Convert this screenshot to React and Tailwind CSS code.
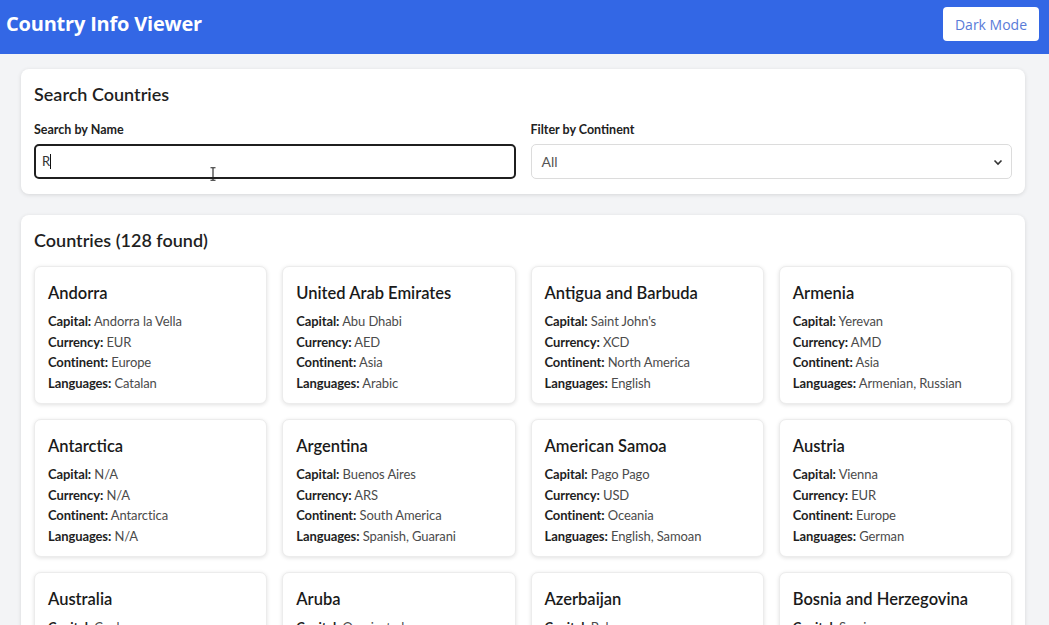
import React from "react";

const countries = [
  { name: "Andorra", capital: "Andorra la Vella", currency: "EUR", continent: "Europe", languages: "Catalan" },
  { name: "United Arab Emirates", capital: "Abu Dhabi", currency: "AED", continent: "Asia", languages: "Arabic" },
  { name: "Antigua and Barbuda", capital: "Saint John's", currency: "XCD", continent: "North America", languages: "English" },
  { name: "Armenia", capital: "Yerevan", currency: "AMD", continent: "Asia", languages: "Armenian, Russian" },
  { name: "Antarctica", capital: "N/A", currency: "N/A", continent: "Antarctica", languages: "N/A" },
  { name: "Argentina", capital: "Buenos Aires", currency: "ARS", continent: "South America", languages: "Spanish, Guarani" },
  { name: "American Samoa", capital: "Pago Pago", currency: "USD", continent: "Oceania", languages: "English, Samoan" },
  { name: "Austria", capital: "Vienna", currency: "EUR", continent: "Europe", languages: "German" },
  { name: "Australia", capital: "Canberra", currency: "AUD", continent: "Oceania", languages: "English" },
  { name: "Aruba", capital: "Oranjestad", currency: "AWG", continent: "North America", languages: "Dutch, Papiamento" },
  { name: "Azerbaijan", capital: "Baku", currency: "AZN", continent: "Asia", languages: "Azerbaijani" },
  { name: "Bosnia and Herzegovina", capital: "Sarajevo", currency: "BAM", continent: "Europe", languages: "Bosnian, Croatian, Serbian" },
];

const lato = { fontFamily: 'Lato, "Open Sans", sans-serif' };

function Row({ label, value }) {
  return (
    <p className="text-[13px] leading-[20.5px] text-[#4b4b4b] tracking-[-0.1px]" style={lato}>
      <span className="font-bold text-[#1f1f1f]">{label}:</span> {value}
    </p>
  );
}

export default function App() {
  return (
    <div className="min-h-screen bg-[#f3f4f6]" style={{ fontFamily: '"Open Sans", "Noto Sans", sans-serif' }}>
      <header className="h-[54px] bg-[#3367e5] pl-[6px] pr-[10px]">
        <div className="h-[48px] flex items-center justify-between">
          <h1 className="text-white text-[20px] font-bold tracking-[-0.2px]">Country Info Viewer</h1>
          <button className="bg-white text-[#5a7bd8] text-[14px] w-[96px] h-[34px] rounded-[4px]">Dark Mode</button>
        </div>
      </header>
      <main className="pl-[21px] pr-[24px] pt-[15px] flex flex-col gap-[21px]">
        <section className="bg-white rounded-lg shadow-[0_1px_4px_rgba(0,0,0,0.12)] px-[13px] pt-[11px] pb-[15px]">
          <h2 className="text-[18px] leading-[28px] font-semibold text-[#1f1f1f]" style={lato}>Search Countries</h2>
          <div className="mt-[13px] grid grid-cols-2 gap-[15px]">
            <div>
              <label className="block text-[12.5px] leading-[18px] font-bold text-[#222] mb-[5px]" style={lato}>Search by Name</label>
              <div className="h-[35px] rounded-[5px] border-2 border-[#1f1f1f] flex items-center px-[6px] text-[13px] text-[#333] relative" style={lato}>
                R<span className="inline-block w-[1px] h-[15px] bg-[#111]"></span>
                <svg className="absolute left-[174px] top-[21px]" width="6" height="14" viewBox="0 0 6 14">
                  <path d="M0.5 0.8 H5.5 M3 0.8 V13.2 M0.5 13.2 H5.5" fill="none" stroke="#222" strokeWidth="1.1" />
                </svg>
              </div>
            </div>
            <div>
              <label className="block text-[12.5px] leading-[18px] font-bold text-[#222] mb-[5px]" style={lato}>Filter by Continent</label>
              <div className="h-[35px] rounded-[5px] border border-[#dcdcdc] flex items-center justify-between pl-[10px] pr-[8px] text-[14px] text-[#555]" style={lato}>
                <span>All</span>
                <svg width="10" height="10" viewBox="0 0 10 10"><path d="M1.5 3.5 L5 7 L8.5 3.5" fill="none" stroke="#333" strokeWidth="1.6" /></svg>
              </div>
            </div>
          </div>
        </section>
        <section className="bg-white rounded-lg shadow-[0_1px_4px_rgba(0,0,0,0.12)] px-[13px] pt-[11px] pb-[14px]">
          <h2 className="text-[18px] leading-[28px] font-semibold text-[#1f1f1f]" style={lato}>Countries (128 found)</h2>
          <div className="mt-[12px] grid grid-cols-4 gap-[15px]">
            {countries.map((c) => (
              <div key={c.name} className="h-[138px] rounded-[7px] border border-[#ececec] bg-white shadow-[0_1px_4px_rgba(0,0,0,0.12)] px-[13px] pt-[14px]">
                <h3 className="text-[16.5px] leading-[24px] font-semibold text-[#1a1a1a] mb-[6px]" style={lato}>{c.name}</h3>
                <Row label="Capital" value={c.capital} />
                <Row label="Currency" value={c.currency} />
                <Row label="Continent" value={c.continent} />
                <Row label="Languages" value={c.languages} />
              </div>
            ))}
          </div>
        </section>
      </main>
    </div>
  );
}
